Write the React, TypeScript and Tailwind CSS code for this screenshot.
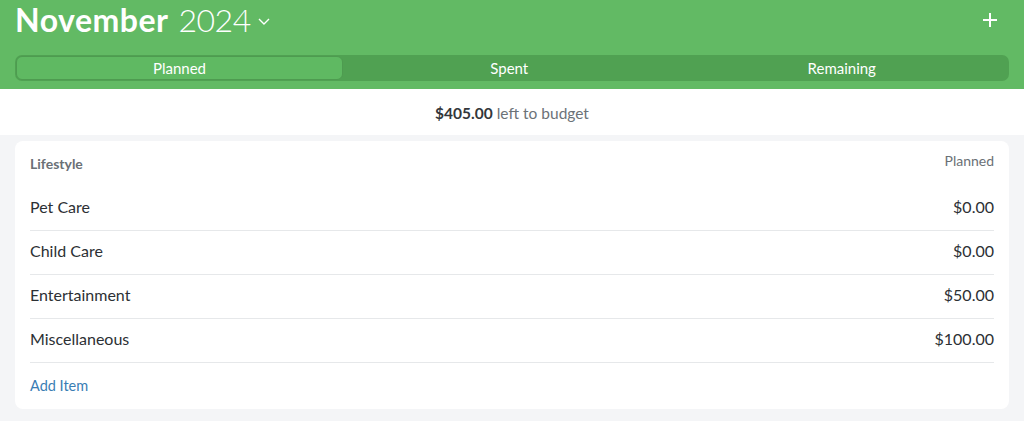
import React from "react";

const rows = [
  { name: "Pet Care", amt: "$0.00" },
  { name: "Child Care", amt: "$0.00" },
  { name: "Entertainment", amt: "$50.00" },
  { name: "Miscellaneous", amt: "$100.00" },
];

export default function App() {
  return (
    <div
      className="w-[1024px] h-[421px] overflow-hidden bg-[#f4f5f7]"
      style={{ fontFamily: "Lato, 'Open Sans', sans-serif" }}
    >
      <div className="bg-[#62ba64] h-[89px] flex flex-col px-[15px]">
        <div className="flex items-center justify-between h-[40px]">
          <div className="flex items-center text-white text-[32px] leading-none">
            <span className="font-bold tracking-[0.5px]">November</span>
            <span className="font-light ml-[10px] tracking-[-0.5px]">2024</span>
            <svg
              className="ml-[7px] mt-[3px]"
              width="12"
              height="7"
              viewBox="0 0 12 7"
              fill="none"
            >
              <path d="M1 1l5 5 5-5" stroke="white" strokeWidth="1.4" />
            </svg>
          </div>
          <svg className="mr-[12px]" width="14" height="14" viewBox="0 0 14 14">
            <path d="M7 0v14M0 7h14" stroke="white" strokeWidth="2" />
          </svg>
        </div>
        <div className="mt-[15px] h-[26px] rounded-[7px] bg-[#50a152] flex p-[1px] text-white text-[15px]">
          <div className="w-[327px] rounded-[6px] bg-[#5fb962] border border-[#4e9b50] flex items-center justify-center">
            Planned
          </div>
          <div className="flex-1 flex items-center justify-center">Spent</div>
          <div className="flex-1 flex items-center justify-center">Remaining</div>
        </div>
      </div>
      <div className="bg-white h-[46px] flex items-center justify-center text-[15.5px] pt-[3px]">
        <span className="font-bold text-[#33373b]">$405.00</span>
        <span className="ml-[4px] text-[#6c7278]">left to budget</span>
      </div>
      <div className="pt-[6px] px-[15px]">
        <div className="bg-white rounded-[8px] px-[15px] h-[268px]">
          <div className="h-[46px] flex justify-between items-start pt-[9px]">
            <span className="mt-[3px] text-[14px] font-bold text-[#6a7076]">Lifestyle</span>
            <span className="text-[14px] text-[#6a7076]">Planned</span>
          </div>
          {rows.map((r) => (
            <div
              key={r.name}
              className="h-[44px] flex items-center justify-between border-b border-[#e6e8ea] text-[16px] text-[#2c3034] pb-[4px]"
            >
              <span>{r.name}</span>
              <span>{r.amt}</span>
            </div>
          ))}
          <div className="h-[46px] flex items-center text-[14.5px] text-[#3a7db4]">
            Add Item
          </div>
        </div>
      </div>
    </div>
  );
}
